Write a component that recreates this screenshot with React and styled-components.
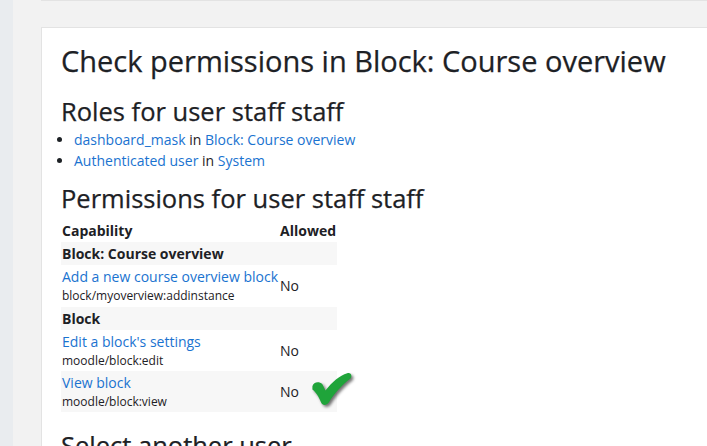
import React from "react";
import styled, { createGlobalStyle } from "styled-components";

const Global = createGlobalStyle`
  html, body {
    margin: 0;
    padding: 0;
    background: #f2f2f2;
    font-family: "Open Sans", "Liberation Sans", sans-serif;
    color: #1d2125;
    overflow: hidden;
  }
`;

const Page = styled.div`
  display: flex;
  height: 446px;
`;

const Rail = styled.div`
  width: 13px;
  flex-shrink: 0;
  background: #e9ecef;
`;

const Main = styled.div`
  flex: 1;
  padding-left: 28px;
  display: flex;
  flex-direction: column;
`;

const TopCard = styled.div`
  height: 2px;
  background: #fff;
  border-bottom: 1px solid #e3e3e3;
  border-left: 1px solid #e3e3e3;
`;

const Card = styled.div`
  margin-top: 26px;
  background: #fff;
  border: 1px solid #e3e3e3;
  border-right: none;
  padding: 16px 19px 0;
  flex: 1;
`;

const Title = styled.h2`
  font-size: 29px;
  font-weight: 400;
  line-height: 1.2;
  margin: 0 0 17px;
  -webkit-text-stroke: 0.25px #1d2125;
`;

const SubTitle = styled.h3`
  font-size: 25.5px;
  font-weight: 400;
  line-height: 1.2;
  margin: 0 0 ${(p) => p.$mb || 0}px;
  -webkit-text-stroke: 0.25px #1d2125;
`;

const RoleList = styled.ul`
  margin: 0 0 12px;
  padding-left: 13px;
  font-size: 14px;
  line-height: 21px;
`;

const Link = styled.a`
  color: #1a73d0;
  text-decoration: none;
`;

const Table = styled.table`
  border-collapse: collapse;
  font-size: 14px;
  margin-top: 5px;
`;

const Row = styled.tr`
  background: ${(p) => (p.$shade ? "#f7f7f7" : "transparent")};
`;

const Th = styled.th`
  text-align: left;
  font-weight: 700;
  padding: 0 1px;
  height: ${(p) => p.$h || 22}px;
  vertical-align: middle;
`;

const Td = styled.td`
  padding: 0 1px;
  height: ${(p) => p.$h || 41}px;
  vertical-align: middle;
  position: relative;
`;

const CapName = styled.div`
  line-height: 20px;
`;

const CapCode = styled.div`
  font-size: 12px;
  line-height: 17px;
`;

const Check = styled.svg`
  position: absolute;
  left: 31px;
  top: 0;
  filter: drop-shadow(2px 2px 1.5px rgba(0, 0, 0, 0.55));
`;

const NextTitle = styled(SubTitle)`
  margin-top: 18px;
`;

const rows = [
  { type: "cat", label: "Block: Course overview" },
  {
    type: "cap",
    name: "Add a new course overview block",
    code: "block/myoverview:addinstance",
    h: 42,
  },
  { type: "cat", label: "Block" },
  { type: "cap", name: "Edit a block's settings", code: "moodle/block:edit" },
  { type: "cap", name: "View block", code: "moodle/block:view", check: true },
];

function CheckMark() {
  return (
    <Check width="44" height="37" viewBox="0 0 40 34">
      <path
        d="M2 14 C3 10 8 9 11 12 L14 18 C20 10 27 4 34 2 C37 1 39 4 37 7 C29 13 22 21 17 29 C15 32 11 32 10 29 C8 24 5 19 2 17 Z"
        fill="#1fa43a"
      />
    </Check>
  );
}

export default function App() {
  let shade = true;
  return (
    <>
      <Global />
      <Page>
        <Rail />
        <Main>
          <TopCard />
          <Card>
            <Title>Check permissions in Block: Course overview</Title>
            <SubTitle $mb={3}>Roles for user staff staff</SubTitle>
            <RoleList>
              <li>
                <Link href="#">dashboard_mask</Link> in{" "}
                <Link href="#">Block: Course overview</Link>
              </li>
              <li>
                <Link href="#">Authenticated user</Link> in{" "}
                <Link href="#">System</Link>
              </li>
            </RoleList>
            <SubTitle>Permissions for user staff staff</SubTitle>
            <Table>
              <thead>
                <tr>
                  <Th $h={23}>Capability</Th>
                  <Th $h={23}>Allowed</Th>
                </tr>
              </thead>
              <tbody>
                {rows.map((r, i) => {
                  const s = shade;
                  shade = !shade;
                  if (r.type === "cat") {
                    return (
                      <Row key={i} $shade={s}>
                        <Th $h={23}>{r.label}</Th>
                        <Th />
                      </Row>
                    );
                  }
                  return (
                    <Row key={i} $shade={s}>
                      <Td $h={r.h}>
                        <CapName>
                          <Link href="#">{r.name}</Link>
                        </CapName>
                        <CapCode>{r.code}</CapCode>
                      </Td>
                      <Td $h={r.h}>
                        No
                        {r.check && <CheckMark />}
                      </Td>
                    </Row>
                  );
                })}
              </tbody>
            </Table>
            <NextTitle>Select another user</NextTitle>
          </Card>
        </Main>
      </Page>
    </>
  );
}
